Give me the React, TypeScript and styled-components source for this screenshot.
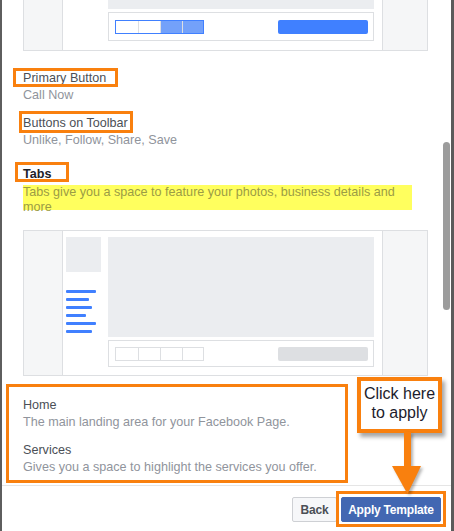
import React from "react";
import styled, { createGlobalStyle } from "styled-components";

const ORANGE = "#f9800e";

const Global = createGlobalStyle`
  html, body { margin: 0; padding: 0; background: #fff; }
  * { box-sizing: border-box; }
`;

const Frame = styled.div`
  position: relative;
  width: 454px;
  height: 531px;
  overflow: hidden;
  background: #fff;
  border-left: 2px solid #5e5e5e;
  border-right: 3px solid #5b5b5b;
  display: flex;
  flex-direction: column;
  font-family: "Liberation Sans", Helvetica, Arial, sans-serif;
  font-size: 12.6px;
`;

const Body = styled.div`
  position: relative;
  height: 485px;
  overflow: hidden;
  flex: none;
`;

const Content = styled.div`
  margin-top: -113px;
  padding-left: 21px;
  width: 426px;
  display: flex;
  flex-direction: column;
`;

const Scrollbar = styled.div`
  position: absolute;
  right: 1px;
  top: 142px;
  width: 7px;
  height: 168px;
  border-radius: 4px;
  background: #9c9c9c;
`;

/* ---------- preview mock ---------- */

const PreviewBox = styled.div<{ $mt: number; $h: number }>`
  width: 405px;
  height: ${(p) => p.$h}px;
  margin-top: ${(p) => p.$mt}px;
  border: 1px solid #dddfe2;
  display: grid;
  grid-template-columns: 38px 321px 44px;
  background: #f5f6f7;
  flex: none;
`;

const Center = styled.div`
  background: #fff;
  border-left: 1px solid #dddfe2;
  border-right: 1px solid #dddfe2;
  padding: 6px 0 0 3px;
  display: grid;
  grid-template-columns: 35px 266px;
  column-gap: 7px;
  align-items: start;
`;

const Side = styled.div`
  display: flex;
  flex-direction: column;
`;

const Avatar = styled.div`
  width: 35px;
  height: 35px;
  background: #ebedf0;
`;

const NavLines = styled.div`
  margin-top: 18px;
  display: flex;
  flex-direction: column;
  gap: 5px;
`;

const NavLine = styled.div<{ $w: number }>`
  width: ${(p) => p.$w}px;
  height: 3px;
  border-radius: 1px;
  background: #4080ff;
`;

const Main = styled.div`
  display: flex;
  flex-direction: column;
`;

const Cover = styled.div<{ $h: number }>`
  height: ${(p) => p.$h}px;
  background: #ebedf0;
`;

const Toolbar = styled.div<{ $h: number }>`
  margin-top: 3px;
  height: ${(p) => p.$h}px;
  border: 1px solid #dddfe2;
  display: flex;
  align-items: center;
  justify-content: space-between;
  padding: 0 5px 0 6px;
`;

const BtnGroup = styled.div<{ $active?: boolean }>`
  display: flex;
  height: 14px;
  border: 1px solid ${(p) => (p.$active ? "#4080ff" : "#dddfe2")};
`;

const Seg = styled.div<{ $active?: boolean; $fill?: boolean; $w: number }>`
  width: ${(p) => p.$w}px;
  height: 100%;
  background: ${(p) => (p.$fill ? "#73a1fa" : "#fff")};
  & + & {
    border-left: 1px solid ${(p) => (p.$active ? "#4a86fb" : "#dddfe2")};
  }
`;

const PrimaryBar = styled.div<{ $active?: boolean }>`
  width: 90px;
  height: 14px;
  border-radius: 2px;
  background: ${(p) => (p.$active ? "#4080ff" : "#dddfe2")};
`;

const navWidths = [30, 23, 26, 20, 30, 26];

function Preview({
  active,
  mt = 0,
  coverH,
  toolbarH,
  height,
}: {
  active?: boolean;
  mt?: number;
  coverH: number;
  toolbarH: number;
  height: number;
}) {
  return (
    <PreviewBox $mt={mt} $h={height}>
      <div />
      <Center>
        <Side>
          <Avatar />
          <NavLines>
            {navWidths.map((w, i) => (
              <NavLine key={i} $w={w} />
            ))}
          </NavLines>
        </Side>
        <Main>
          <Cover $h={coverH} />
          <Toolbar $h={toolbarH}>
            <BtnGroup $active={active}>
              <Seg $w={22} $active={active} />
              <Seg $w={22} $active={active} />
              <Seg $w={22} $active={active} $fill={active} />
              <Seg $w={21} $active={active} $fill={active} />
            </BtnGroup>
            <PrimaryBar $active={active} />
          </Toolbar>
        </Main>
      </Center>
      <div />
    </PreviewBox>
  );
}

/* ---------- text ---------- */

const Section = styled.div<{ $mt: number }>`
  margin-top: ${(p) => p.$mt}px;
  display: flex;
  flex-direction: column;
  align-items: flex-start;
`;

const Title = styled.span<{ $bold?: boolean }>`
  position: relative;
  display: inline-block;
  line-height: 16px;
  color: ${(p) => (p.$bold ? "#1d2129" : "#4b4f56")};
  font-weight: ${(p) => (p.$bold ? 700 : 400)};
`;

const Sub = styled.div`
  margin-top: 1px;
  line-height: 16px;
  color: #90949c;
`;

const Highlight = styled.div`
  margin-top: 3px;
  width: 389px;
  height: 25px;
  background: #ffff5e;
  color: #9b9c45;
  line-height: 15px;
  overflow: visible;
`;

const Annot = styled.span<{ $t: number; $r: number; $b: number; $l: number }>`
  position: absolute;
  top: ${(p) => p.$t}px;
  right: ${(p) => p.$r}px;
  bottom: ${(p) => p.$b}px;
  left: ${(p) => p.$l}px;
  border: 3px solid ${ORANGE};
  pointer-events: none;
`;

const TabList = styled.div`
  position: relative;
  margin-top: 21px;
  display: flex;
  flex-direction: column;
  gap: 12px;
`;

const TabItem = styled.div`
  display: flex;
  flex-direction: column;
  line-height: 16px;
`;

const TabName = styled.div`
  color: #4b4f56;
`;

/* ---------- footer ---------- */

const Footer = styled.div`
  flex: 1;
  border-top: 1px solid #e5e5e5;
  display: flex;
  justify-content: flex-end;
  align-items: flex-start;
  gap: 4px;
  padding: 11px 10px 0 0;
`;

const Button = styled.button<{ $primary?: boolean; $w: number }>`
  width: ${(p) => p.$w}px;
  height: 25px;
  padding: 0;
  border-radius: 2px;
  font-family: inherit;
  font-size: 12px;
  font-weight: 700;
  letter-spacing: -0.2px;
  border: 1px solid ${(p) => (p.$primary ? "#4267b2" : "#ced0d4")};
  background: ${(p) => (p.$primary ? "#4267b2" : "#f6f7f9")};
  color: ${(p) => (p.$primary ? "#fff" : "#4b4f56")};
`;

const ApplyWrap = styled.span`
  position: relative;
  display: inline-flex;
`;

/* ---------- callout overlay ---------- */

const Callout = styled.div`
  position: absolute;
  left: 355px;
  top: 377px;
  width: 85px;
  height: 56px;
  border: 4px solid ${ORANGE};
  background: #fff;
  box-shadow: 3px 4px 4px rgba(0, 0, 0, 0.35);
  padding-top: 3px;
  text-align: center;
  font-size: 16px;
  line-height: 19px;
  color: #1c1c2c;
  z-index: 2;
`;

const Arrow = styled.svg`
  position: absolute;
  left: 386px;
  top: 432px;
  z-index: 3;
  filter: drop-shadow(2px 2px 1.5px rgba(0, 0, 0, 0.3));
`;

export default function App() {
  return (
    <>
      <Global />
      <Frame>
        <Body>
          <Content>
            <Preview active coverH={115} toolbarH={29} height={164} />

            <Section $mt={19}>
              <Title>
                Primary Button
                <Annot $t={-2} $r={-12} $b={-1} $l={-10} />
              </Title>
              <Sub>Call Now</Sub>
            </Section>

            <Section $mt={12}>
              <Title>
                Buttons on Toolbar
                <Annot $t={-4} $r={-5} $b={-2} $l={-4} />
              </Title>
              <Sub>Unlike, Follow, Share, Save</Sub>
            </Section>

            <Section $mt={18}>
              <Title $bold>
                Tabs
                <Annot $t={-4} $r={-18} $b={0} $l={-8} />
              </Title>
              <Highlight>
                Tabs give you a space to feature your photos, business details and more
              </Highlight>
            </Section>

            <Preview mt={20} coverH={100} toolbarH={27} height={146} />

            <TabList>
              <TabItem>
                <TabName>Home</TabName>
                <Sub>The main landing area for your Facebook Page.</Sub>
              </TabItem>
              <TabItem>
                <TabName>Services</TabName>
                <Sub>Gives you a space to highlight the services you offer.</Sub>
              </TabItem>
              <Annot $t={-13} $r={80} $b={-8} $l={-17} />
            </TabList>
          </Content>
          <Scrollbar />
        </Body>

        <Footer>
          <Button $w={45}>Back</Button>
          <ApplyWrap>
            <Button $primary $w={100}>
              Apply Template
            </Button>
            <Annot $t={-6} $r={-5} $b={-5} $l={-5} />
          </ApplyWrap>
        </Footer>

        <Callout>
          Click here
          <br />
          to apply
        </Callout>
        <Arrow width="34" height="64" viewBox="0 0 34 64">
          <rect x="16" y="0" width="7" height="37" fill={ORANGE} />
          <polygon points="4,34 33,34 19.5,62" fill={ORANGE} />
        </Arrow>
      </Frame>
    </>
  );
}
